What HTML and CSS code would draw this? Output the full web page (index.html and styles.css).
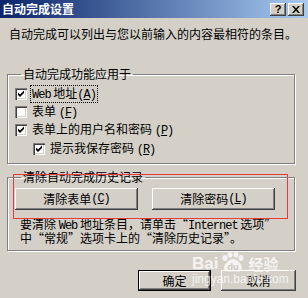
FILE: index.html
```html
<!DOCTYPE html>
<html lang="zh-CN">
<head>
<meta charset="utf-8">
<link rel="stylesheet" href="styles.css">
</head>
<body>
<div class="win">
  <div class="title">
    <span class="title-text">自动完成设置</span>
    <div class="tbtns">
      <span class="tb tb-help">?</span>
      <span class="tb"><svg width="8" height="7" viewBox="0 0 8 7"><path d="M0 0h2l2 2.5L6 0h2L5 3.5 8 7H6L4 4.5 2 7H0l3-3.5z" fill="#000"/></svg></span>
    </div>
  </div>
  <div class="body">
    <p class="intro">自动完成可以列出与您以前输入的内容最相符的条目。</p>
    <fieldset class="grp g1">
      <legend>自动完成功能应用于</legend>
      <div class="row"><span class="cb on"></span><span class="lbl focus"><span class="en">Web</span> 地址<span class="en">(<u>A</u>)</span></span></div>
      <div class="row"><span class="cb"></span><span class="lbl">表单 <span class="en">(<u>F</u>)</span></span></div>
      <div class="row"><span class="cb on"></span><span class="lbl">表单上的用户名和密码 <span class="en">(<u>P</u>)</span></span></div>
      <div class="row sub"><span class="cb on"></span><span class="lbl">提示我保存密码 <span class="en">(<u>R</u>)</span></span></div>
    </fieldset>
    <fieldset class="grp g2">
      <legend>清除自动完成历史记录</legend>
      <div class="btnrow">
        <span class="btn wide">清除表单 <span class="en">(<u>C</u>)</span></span>
        <span class="btn wide">清除密码 <span class="en">(<u>L</u>)</span></span>
      </div>
      <p class="note">要清除 <span class="en">Web</span> 地址条目，请单击“<span class="en">Internet</span> 选项”<br>中“常规”选项卡上的“清除历史记录”。</p>
    </fieldset>
    <div class="actions">
      <span class="btn def">确定</span>
      <span class="btn">取消</span>
    </div>
  </div>
  <div class="redbox"></div>
  <div class="wm">
    <div class="wm-top">
      <span class="wm-bai">Bai</span>
      <svg class="wm-paw" width="30" height="20" viewBox="0 0 30 20">
        <ellipse cx="7" cy="6" rx="2.5" ry="3" fill="rgba(255,255,255,0.75)"/>
        <ellipse cx="12" cy="2.8" rx="2.5" ry="2.8" fill="rgba(255,255,255,0.75)"/>
        <ellipse cx="18" cy="2.8" rx="2.5" ry="2.8" fill="rgba(255,255,255,0.75)"/>
        <ellipse cx="23" cy="6" rx="2.5" ry="3" fill="rgba(255,255,255,0.75)"/>
        <path d="M15 7c-4 0-9 5-9 9 0 3 3 4 5 3.5 2-.5 6-.5 8 0 2 .5 5-.5 5-3.5 0-4-5-9-9-9z" fill="rgba(255,255,255,0.75)"/>
        <text x="15" y="18" text-anchor="middle" font-family="Liberation Sans, sans-serif" font-weight="bold" font-size="9" fill="#c9c5bd">du</text>
      </svg>
      <span class="wm-jy">经验</span>
    </div>
    <div class="wm-url">jingyan.baidu.com</div>
  </div>
</div>
</body>
</html>
```

FILE: styles.css
```css
* { box-sizing: border-box; }

body {
  margin: 0;
  width: 308px;
  height: 298px;
  overflow: hidden;
  background: #d4d0c8;
  font-family: "Noto Sans CJK SC", sans-serif;
  font-size: 12px;
  color: #000;
}

.win {
  position: relative;
  width: 308px;
  height: 298px;
}

.en {
  font-family: "Liberation Mono", monospace;
  font-size: 12px;
  letter-spacing: -1px;
}

.title {
  height: 18px;
  background: linear-gradient(to right, #0a246a, #a6caf0);
  display: flex;
  align-items: center;
  justify-content: space-between;
  padding: 0 4px 0 2px;
}

.title-text {
  color: #fff;
  font-weight: bold;
  font-size: 12px;
  line-height: 14px;
}

.tbtns {
  display: flex;
  gap: 2px;
}

.tb {
  width: 16px;
  height: 13px;
  background: #d4d0c8;
  box-shadow: inset -1px -1px #404040, inset 1px 1px #fff, inset -2px -2px #808080, inset 2px 2px #d4d0c8;
  display: flex;
  align-items: center;
  justify-content: center;
}

.tb-help {
  font-family: "Liberation Sans", sans-serif;
  font-weight: bold;
  font-size: 11px;
  line-height: 13px;
}

.body {
  padding: 0 0 0 7px;
}

.intro {
  margin: 9px 0 0 2px;
  line-height: 14px;
  white-space: nowrap;
}

.grp {
  margin: 0;
  width: 288px;
  border: 1px solid #808080;
  box-shadow: inset 1px 1px 0 #fff, 1px 1px 0 #fff;
  min-width: 0;
}

.grp legend {
  padding: 0 2px;
  margin-left: 6px;
  line-height: 14px;
}

.g1 {
  margin-top: 26px;
  padding: 4px 0 5px 7px;
}

.row {
  height: 18px;
  display: flex;
  align-items: center;
}

.row.sub {
  margin-top: 1px;
  padding-left: 18px;
}

.cb {
  width: 12px;
  height: 12px;
  flex: none;
  background: #fff;
  box-shadow: inset 1px 1px #808080, inset 2px 2px #404040, inset -1px -1px #fff, inset -2px -2px #d4d0c8;
  margin-right: 5px;
}

.cb.on {
  background: #fff url("data:image/svg+xml;utf8,<svg xmlns='http://www.w3.org/2000/svg' width='12' height='12'><path d='M3 4.5v2.5l2 2 4-4V2.5l-4 4z' fill='black'/></svg>") no-repeat;
}

.lbl {
  line-height: 14px;
  white-space: nowrap;
}

.lbl.focus {
  margin-left: -1px;
  padding: 0 1px;
  outline: 1px dotted #000;
}

.g2 {
  margin-top: 6px;
  padding: 4px 0 6px 7px;
}

.btnrow {
  display: flex;
  gap: 14px;
}

.btn {
  height: 22px;
  display: flex;
  align-items: center;
  justify-content: center;
  background: #d4d0c8;
  box-shadow: inset -1px -1px #404040, inset 1px 1px #fff, inset -2px -2px #808080, inset 2px 2px #d4d0c8;
  line-height: 14px;
  white-space: nowrap;
}

.btn.wide {
  width: 123px;
}

.note {
  margin: 8px 0 0 5px;
  line-height: 12px;
  white-space: nowrap;
}

.actions {
  display: flex;
  justify-content: flex-end;
  gap: 10px;
  margin-top: 19px;
  padding-right: 12px;
}

.actions .btn {
  width: 75px;
  height: 21px;
}

.actions .btn.def {
  width: 73px;
  border: 1px solid #000;
}

.redbox {
  position: absolute;
  left: 13px;
  top: 174px;
  width: 275px;
  height: 45px;
  border: 1px solid #e8393d;
}

.wm {
  position: absolute;
  left: 192px;
  top: 253px;
  color: rgba(255, 255, 255, 0.75);
  pointer-events: none;
}

.wm-top {
  display: flex;
  align-items: flex-end;
  height: 19px;
}

.wm-bai {
  font-family: "Liberation Sans", sans-serif;
  font-weight: bold;
  font-size: 17px;
  line-height: 17px;
}

.wm-jy {
  font-size: 15px;
  line-height: 17px;
  font-weight: bold;
}

.wm-url {
  font-family: "Liberation Sans", sans-serif;
  font-size: 12px;
  line-height: 13px;
  margin-top: 1px;
}
```
